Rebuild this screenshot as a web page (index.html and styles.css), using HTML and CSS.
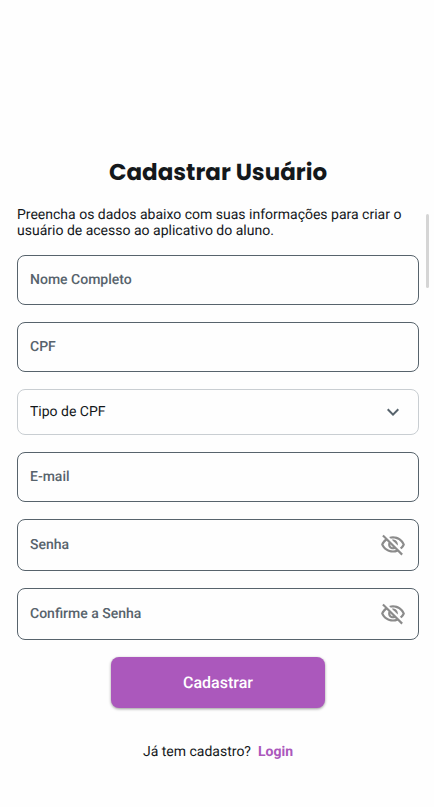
FILE: index.html
```html
<!DOCTYPE html>
<html lang="pt-BR">
<head>
<meta charset="utf-8">
<meta name="viewport" content="width=device-width, initial-scale=1">
<title>Cadastrar Usuário</title>
<link rel="stylesheet" href="styles.css">
</head>
<body>
<svg class="sprite" aria-hidden="true">
  <symbol id="eye-off" viewBox="0 0 24 24">
    <path d="M12 6c3.790 0 7.170 2.130 8.820 5.500-.59 1.220-1.420 2.270-2.410 3.120l1.410 1.410c1.390-1.230 2.490-2.770 3.180-4.530C21.270 7.110 17 4 12 4c-1.270 0-2.490.2-3.640.57l1.650 1.650C10.660 6.090 11.320 6 12 6zm-1.070 1.140L13 9.210c.57.25 1.030.71 1.280 1.280l2.070 2.070c.08-.34.14-.7.14-1.070C16.500 9.010 14.480 7 12 7c-.37 0-.72.05-1.070.14zM2.010 3.870l2.680 2.680C3.060 7.830 1.770 9.530 1 11.500 2.730 15.890 7 19 12 19c1.520 0 2.980-.29 4.320-.82l3.420 3.420 1.410-1.410L3.420 2.450 2.010 3.870zm7.500 7.500l2.610 2.610c-.04.010-.08.020-.12.020-1.380 0-2.500-1.120-2.500-2.500 0-.05.010-.08.010-.13zm-3.400-3.400l1.750 1.750c-.23.55-.36 1.150-.36 1.780 0 2.480 2.020 4.500 4.500 4.500.63 0 1.230-.13 1.770-.36l.98.98c-.88.24-1.800.38-2.750.38-3.790 0-7.170-2.130-8.820-5.500.7-1.430 1.720-2.610 2.930-3.530z"/>
  </symbol>
</svg>
<main class="page">
  <h1 class="title">Cadastrar Usuário</h1>
  <p class="intro">Preencha os dados abaixo com suas informações para criar o usuário de acesso ao aplicativo do aluno.</p>
  <form class="form">
    <div class="field">
      <label for="nome">Nome Completo</label>
      <input id="nome" type="text">
    </div>
    <div class="field">
      <label for="cpf">CPF</label>
      <input id="cpf" type="text">
    </div>
    <div class="field field-select">
      <select aria-label="Tipo de CPF">
        <option>Tipo de CPF</option>
      </select>
      <svg class="chevron" viewBox="0 0 24 24" aria-hidden="true"><path d="M7.400 8.600 12 13.200l4.600-4.600L18 10l-6 6-6-6z"/></svg>
    </div>
    <div class="field">
      <label for="email">E-mail</label>
      <input id="email" type="email">
    </div>
    <div class="field field-password">
      <label for="senha">Senha</label>
      <input id="senha" type="password">
      <button class="toggle" type="button" aria-label="Mostrar senha"><svg viewBox="0 0 24 24"><use href="#eye-off"/></svg></button>
    </div>
    <div class="field field-password">
      <label for="confirma">Confirme a Senha</label>
      <input id="confirma" type="password">
      <button class="toggle" type="button" aria-label="Mostrar confirmação"><svg viewBox="0 0 24 24"><use href="#eye-off"/></svg></button>
    </div>
    <button class="submit" type="submit">Cadastrar</button>
  </form>
  <p class="login">Já tem cadastro? <a href="#login">Login</a></p>
</main>
<div class="scroll-thumb"></div>
</body>
</html>
```
FILE: styles.css
```css
* {
  box-sizing: border-box;
}

body {
  margin: 0;
  background: #fefefe;
  color: #14181b;
  font-family: Roboto, "Liberation Sans", sans-serif;
  font-size: 14px;
  text-rendering: geometricPrecision;
}

.sprite {
  position: absolute;
  width: 0;
  height: 0;
}

.page {
  padding: 155px 15px 40px 17px;
}

.title {
  margin: 0;
  font-family: Poppins, Inter, sans-serif;
  font-size: 23px;
  line-height: 36px;
  font-weight: 700;
  text-align: center;
}

.intro {
  margin: 16px 0;
  line-height: 16px;
}

.form {
  display: flex;
  flex-direction: column;
  gap: 17px;
}

.field {
  display: grid;
  grid-template-columns: 1fr auto;
  align-items: center;
  height: 50px;
  border: 1px solid #57636c;
  border-radius: 8px;
}

.field-select {
  height: 46px;
  border-color: #c9ced2;
}

.field-password {
  height: 52px;
}

.field label,
.field input,
.field select {
  grid-row: 1;
  grid-column: 1 / -1;
  padding: 0 12px;
}

.field label {
  color: #57636c;
  font-weight: 500;
  pointer-events: none;
}

.field input,
.field select {
  width: 100%;
  height: 100%;
  border: 0;
  background: transparent;
  color: #14181b;
  font: inherit;
  text-rendering: inherit;
  outline: 0;
  appearance: none;
}

.field:focus-within {
  border-color: #ab58bc;
}

.chevron {
  grid-row: 1;
  grid-column: 2;
  width: 24px;
  height: 24px;
  margin-right: 13px;
  fill: #57636c;
  pointer-events: none;
}

.toggle {
  grid-row: 1;
  grid-column: 2;
  display: flex;
  margin-right: 12px;
  padding: 0;
  border: 0;
  background: none;
}

.toggle svg {
  width: 26px;
  height: 26px;
  fill: #8b8b8b;
}

.submit {
  align-self: center;
  width: 214px;
  height: 51px;
  border: 0;
  border-radius: 8px;
  background: #ab58bc;
  box-shadow: 0 1px 3px rgba(0, 0, 0, 0.4);
  color: #fff;
  font: 500 16px Roboto, sans-serif;
  text-rendering: inherit;
}

.login {
  display: flex;
  justify-content: center;
  gap: 7px;
  margin: 36px 0 0;
  line-height: 16px;
}

.login a {
  color: #ab58bc;
  font-weight: 700;
  text-decoration: none;
}

.scroll-thumb {
  position: absolute;
  top: 214px;
  right: 5px;
  width: 3px;
  height: 74px;
  border-radius: 2px;
  background: #d5d5d5;
}
```
